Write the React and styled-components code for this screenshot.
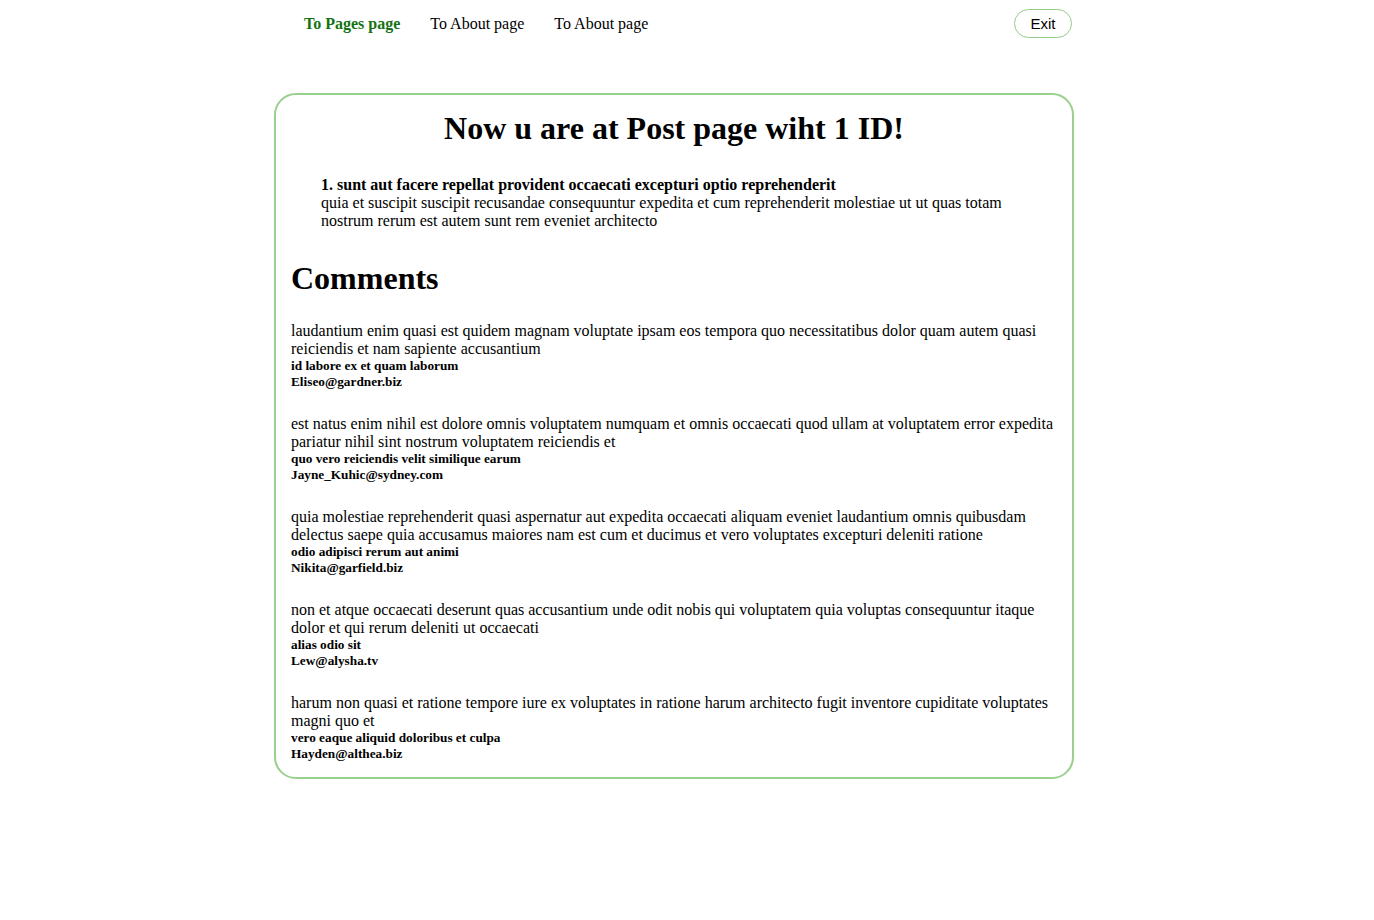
import styled, { createGlobalStyle } from "styled-components";

const posts = {
  id: 1,
  title: "sunt aut facere repellat provident occaecati excepturi optio reprehenderit",
  body: "quia et suscipit suscipit recusandae consequuntur expedita et cum reprehenderit molestiae ut ut quas totam nostrum rerum est autem sunt rem eveniet architecto",
};

const comments = [
  {
    body: "laudantium enim quasi est quidem magnam voluptate ipsam eos tempora quo necessitatibus dolor quam autem quasi reiciendis et nam sapiente accusantium",
    name: "id labore ex et quam laborum",
    email: "Eliseo@gardner.biz",
  },
  {
    body: "est natus enim nihil est dolore omnis voluptatem numquam et omnis occaecati quod ullam at voluptatem error expedita pariatur nihil sint nostrum voluptatem reiciendis et",
    name: "quo vero reiciendis velit similique earum",
    email: "Jayne_Kuhic@sydney.com",
  },
  {
    body: "quia molestiae reprehenderit quasi aspernatur aut expedita occaecati aliquam eveniet laudantium omnis quibusdam delectus saepe quia accusamus maiores nam est cum et ducimus et vero voluptates excepturi deleniti ratione",
    name: "odio adipisci rerum aut animi",
    email: "Nikita@garfield.biz",
  },
  {
    body: "non et atque occaecati deserunt quas accusantium unde odit nobis qui voluptatem quia voluptas consequuntur itaque dolor et qui rerum deleniti ut occaecati",
    name: "alias odio sit",
    email: "Lew@alysha.tv",
  },
  {
    body: "harum non quasi et ratione tempore iure ex voluptates in ratione harum architecto fugit inventore cupiditate voluptates magni quo et",
    name: "vero eaque aliquid doloribus et culpa",
    email: "Hayden@althea.biz",
  },
];

const App = () => {
  return (
    <>
      <GlobalStyle />
      <Page>
        <Navbar>
          <Links>
            <NavLink href="#" $active>To Pages page</NavLink>
            <NavLink href="#">To About page</NavLink>
            <NavLink href="#">To About page</NavLink>
          </Links>
          <ExitButton>Exit</ExitButton>
        </Navbar>
        <Card>
          <Title>Now u are at Post page wiht {posts.id} ID!</Title>
          <Post>
            <PostTitle>
              {posts.id}. {posts.title}
            </PostTitle>
            <div>{posts.body}</div>
          </Post>
          <CommentsTitle>Comments</CommentsTitle>
          {comments.map((c) => (
            <Comment key={c.email}>
              <div>{c.body}</div>
              <CommentMeta>{c.name}</CommentMeta>
              <CommentMeta>{c.email}</CommentMeta>
            </Comment>
          ))}
        </Card>
      </Page>
    </>
  );
};

export default App;

const GlobalStyle = createGlobalStyle`
  body {
    margin: 0;
    background: #fff;
    color: #000;
    font-family: "Liberation Serif", "Times New Roman", serif;
    font-size: 16px;
  }
`;

const Page = styled.div`
  width: 800px;
  margin: 0 auto;
  padding-right: 26px;
`;

const Navbar = styled.nav`
  height: 47px;
  display: flex;
  align-items: center;
  justify-content: space-between;
  padding: 0 2px 0 30px;
`;

const Links = styled.div`
  display: flex;
  gap: 30px;
`;

const NavLink = styled.a`
  text-decoration: none;
  font-size: 16px;
  color: ${(p) => (p.$active ? "#137313" : "#000")};
  font-weight: ${(p) => (p.$active ? "bold" : "normal")};
`;

const ExitButton = styled.button`
  height: 29px;
  width: 58px;
  padding: 0;
  border: 1px solid #94cc88;
  border-radius: 15px;
  background: #fff;
  font-family: "Liberation Sans", Arial, sans-serif;
  font-size: 15px;
  color: #000;
  cursor: pointer;
`;

const Card = styled.div`
  margin-top: 46px;
  border: 2px solid #9ad08e;
  border-radius: 22px;
  padding: 15px;
  box-sizing: border-box;
  width: 800px;
`;

const Title = styled.h1`
  margin: 0 0 29px;
  font-size: 32px;
  text-align: center;
`;

const Post = styled.div`
  margin: 0 30px;
  line-height: 18px;
`;

const PostTitle = styled.div`
  font-weight: bold;
`;

const CommentsTitle = styled.h2`
  font-size: 32px;
  margin: 30px 0 25px;
`;

const Comment = styled.div`
  line-height: 18px;
  & + & {
    margin-top: 25px;
  }
`;

const CommentMeta = styled.div`
  font-size: 13.28px;
  font-weight: bold;
  line-height: 16px;
`;
